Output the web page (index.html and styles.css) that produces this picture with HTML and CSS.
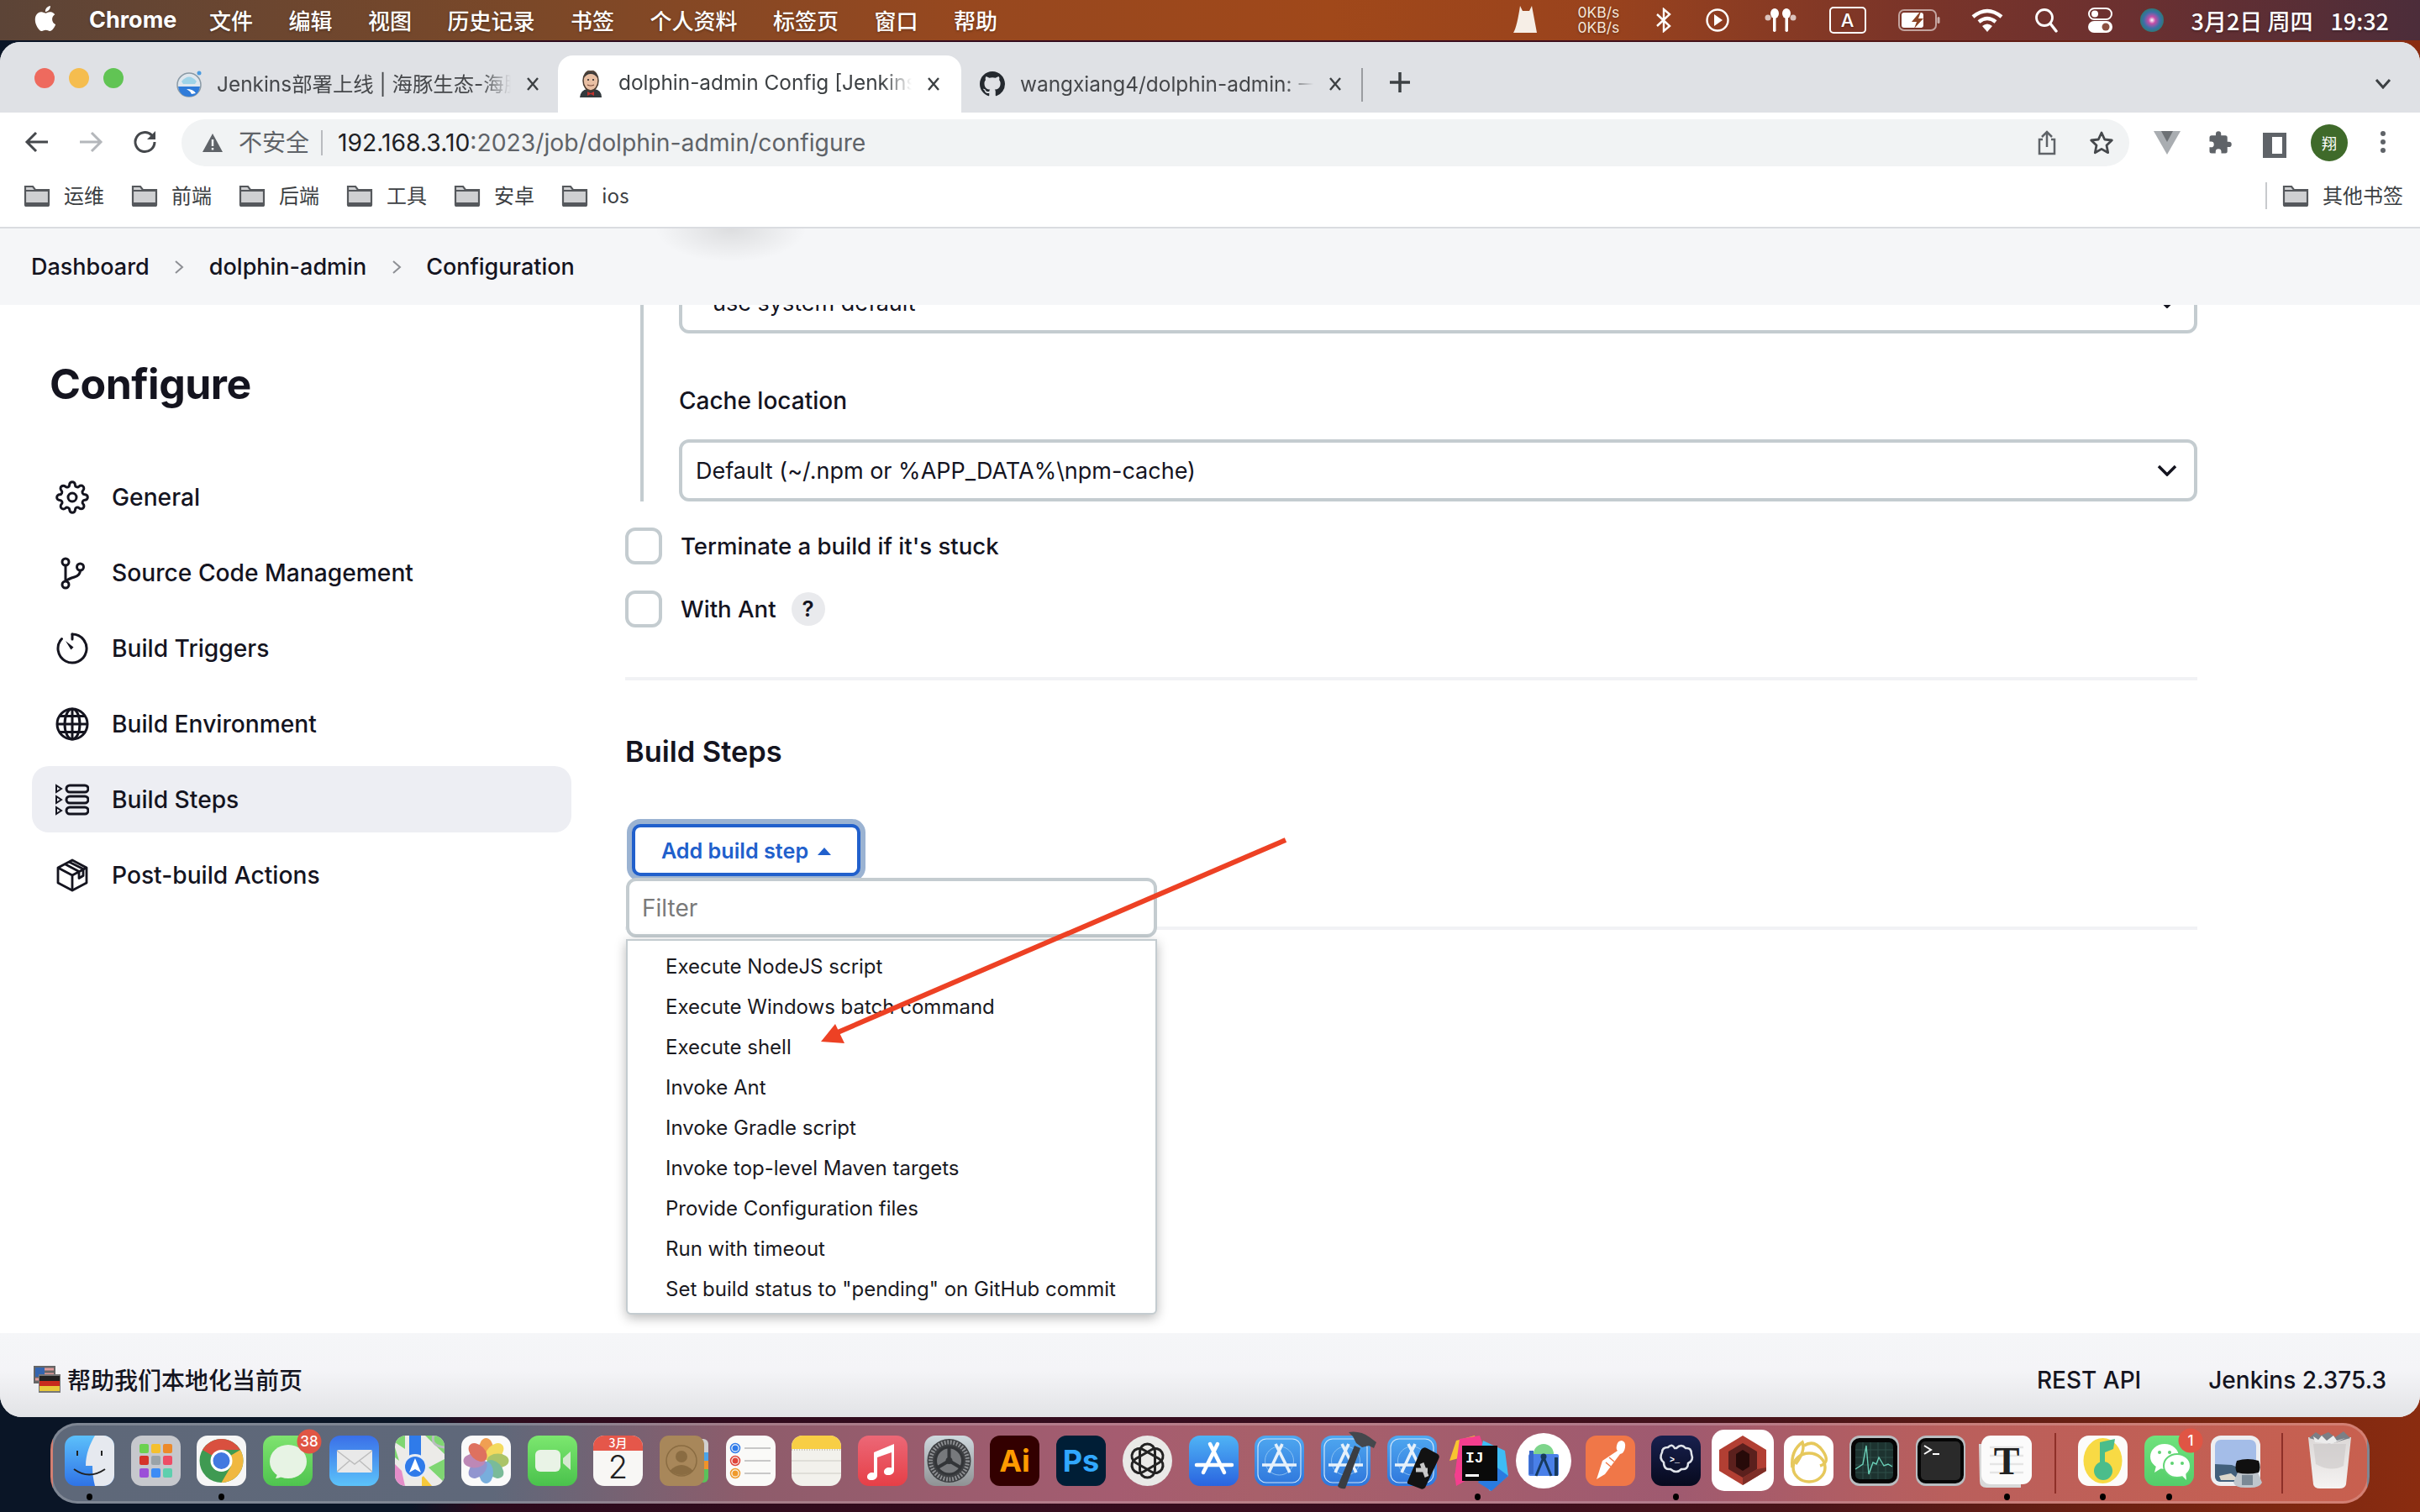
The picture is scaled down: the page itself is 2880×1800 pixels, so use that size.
FILE: index.html
```html
<!DOCTYPE html>
<html lang="zh-CN">
<head>
<meta charset="utf-8">
<title>dolphin-admin Config [Jenkins]</title>
<link rel="stylesheet" href="styles.css">
</head>
<body>
<header class="menubar">
  <svg class="apple" viewBox="0 0 24 24"><path fill="#fff" d="M18.71 19.5c-.83 1.24-1.71 2.45-3.05 2.47-1.34.03-1.77-.79-3.29-.79-1.53 0-2 .77-3.27.82-1.31.05-2.3-1.32-3.14-2.53C4.25 17 2.94 12.45 4.7 9.39c.87-1.52 2.43-2.48 4.12-2.51 1.28-.02 2.5.87 3.29.87.78 0 2.26-1.07 3.81-.91.65.03 2.47.26 3.64 1.98-.09.06-2.17 1.28-2.15 3.81.03 3.02 2.65 4.03 2.68 4.04-.03.07-.42 1.44-1.38 2.83M13 3.5c.73-.83 1.94-1.46 2.94-1.5.13 1.17-.34 2.35-1.04 3.19-.69.85-1.83 1.51-2.95 1.42-.15-1.15.41-2.35 1.05-3.11z"/></svg>
  <nav class="menu-left">
    <b class="app-name">Chrome</b><span>文件</span><span>编辑</span><span>视图</span><span>历史记录</span><span>书签</span><span>个人资料</span><span>标签页</span><span>窗口</span><span>帮助</span>
  </nav>
  <div class="status">
    <svg class="st st-cat" width="33" height="32" viewBox="0 0 33 32"><path fill="#f6eee6" d="M9 0l3 6h8l3-6 6 32H1C4 28 7 14 9 0z"/></svg>
    <div class="speed st-speed"><span>0KB/s</span><span>0KB/s</span></div>
    <svg class="st st-bt" width="20" height="30" viewBox="0 0 20 30"><path fill="none" stroke="#fff" stroke-width="2.4" d="M2 8l15 14-7 6V2l7 6L2 22"/></svg>
    <svg class="st st-play" width="28" height="30" viewBox="0 0 28 30"><circle cx="14" cy="15" r="12.5" fill="none" stroke="#fff" stroke-width="2.4"/><path fill="#fff" d="M10 8l10 7-10 7z"/></svg>
    <svg class="st st-air" width="38" height="28" viewBox="0 0 38 28"><g fill="#fff"><ellipse cx="12" cy="6" rx="5" ry="6"/><ellipse cx="26" cy="6" rx="5" ry="6"/><rect x="10" y="8" width="3.5" height="20" rx="1.7"/><rect x="24.5" y="8" width="3.5" height="20" rx="1.7"/><circle cx="4" cy="11" r="3.5" opacity=".7"/><circle cx="34" cy="11" r="3.5" opacity=".7"/></g></svg>
    <div class="abox">A</div>
    <svg class="st st-batt" width="50" height="26" viewBox="0 0 50 26"><rect x="1" y="1" width="44" height="24" rx="6" fill="none" stroke="#fff" stroke-opacity=".55" stroke-width="2"/><rect x="4" y="4" width="26" height="18" rx="3" fill="#fff"/><rect x="46.5" y="9" width="3" height="8" rx="1.5" fill="#fff" opacity=".6"/><path fill="#8b4426" d="M26 3L16 15h6l-3 8 11-12h-6l3-8z"/></svg>
    <svg class="st st-wifi" width="40" height="28" viewBox="0 0 40 28"><g fill="none" stroke="#fff" stroke-width="4.5"><path d="M3 10q17-14 34 0"/><path d="M10 16q10-8 20 0"/></g><path fill="#fff" d="M14 21q6-5 12 0l-6 7z"/></svg>
    <svg class="st" width="28" height="30" viewBox="0 0 28 30"><circle cx="12" cy="12" r="9.5" fill="none" stroke="#fff" stroke-width="2.8"/><path stroke="#fff" stroke-width="3.4" stroke-linecap="round" d="M19 19l7 9"/></svg>
    <svg class="st" width="29" height="30" viewBox="0 0 29 30"><rect x="1" y="1" width="27" height="13" rx="6.5" fill="none" stroke="#fff" stroke-width="2"/><circle cx="8" cy="7.5" r="4" fill="#fff"/><rect x="0" y="16" width="29" height="14" rx="7" fill="#fff"/><circle cx="21" cy="23" r="4.5" fill="#8b5040"/></svg>
    <svg class="st st-siri" width="28" height="28" viewBox="0 0 28 28"><defs><radialGradient id="siri"><stop offset="0" stop-color="#fff"/><stop offset=".3" stop-color="#c44ea8"/><stop offset=".7" stop-color="#3b6fa8"/><stop offset="1" stop-color="#2d7a7a"/></radialGradient></defs><circle cx="14" cy="14" r="14" fill="url(#siri)"/></svg>
    <span class="clock st-date">3月2日 周四</span>
    <span class="clock st-time">19:32</span>
  </div>
</header>

<main class="window">
  <div class="tabstrip">
    <div class="lights"><i class="red"></i><i class="yellow"></i><i class="green"></i></div>
    <div class="tab tab-one">
      <svg class="fav" viewBox="0 0 30 32"><circle cx="15" cy="17" r="14" fill="#dfe7ee" stroke="#8a9aa6" stroke-width="1.5"/><path fill="#9ed3e8" d="M6 13q9-11 18 0l-2 3H8z"/><path fill="#2f7bd9" d="M2 19h26q-2 12-13 12T2 19z"/><path fill="#fff" d="M12 22q8 0 11 5l-5 1q-2-4-6-6z"/><circle cx="27" cy="3" r="2.5" fill="#4a9be0"/></svg>
      <span class="tab-title">Jenkins部署上线 | 海豚生态-海豚</span>
      <svg class="tab-x" width="16" height="18" viewBox="0 0 16 18"><path fill="none" stroke="#3c4043" stroke-width="2.4" d="M2 2l12 14M14 2L2 16"/></svg>
    </div>
    <div class="tab active">
      <svg class="fav" viewBox="0 0 30 32"><path fill="#33393d" d="M2 32q1-9 9-10h8q9 1 9 10z"/><path fill="#c0332e" d="M11 25l4 2 4-2v5l-4-2-4 2z"/><ellipse cx="15" cy="12" rx="9" ry="12" fill="#e9bfa3" stroke="#4a3b30" stroke-width="1.5"/><path fill="#3d3a38" d="M7 9q1-8 8-8t8 8q-3-5-8-5T7 9z"/><circle cx="12" cy="11" r="1" fill="#222"/><circle cx="18" cy="11" r="1" fill="#222"/><path d="M11 17q4 2 8 0" stroke="#7a4a3a" stroke-width="1.2" fill="none"/></svg>
      <span class="tab-title">dolphin-admin Config [Jenkins]</span>
      <svg class="tab-x" width="16" height="18" viewBox="0 0 16 18"><path fill="none" stroke="#3c4043" stroke-width="2.4" d="M2 2l12 14M14 2L2 16"/></svg>
    </div>
    <div class="tab tab-three">
      <svg class="fav" viewBox="0 0 16 16"><path fill="#24292f" d="M8 0C3.58 0 0 3.58 0 8c0 3.54 2.29 6.53 5.47 7.59.4.07.55-.17.55-.38 0-.19-.01-.82-.01-1.49-2.01.37-2.53-.49-2.69-.94-.09-.23-.48-.94-.82-1.13-.28-.15-.68-.52-.01-.53.63-.01 1.08.58 1.23.82.72 1.21 1.87.87 2.33.66.07-.52.28-.87.51-1.07-1.78-.2-3.64-.89-3.64-3.95 0-.87.31-1.59.82-2.15-.08-.2-.36-1.02.08-2.12 0 0 .67-.21 2.2.82.64-.18 1.32-.27 2-.27.68 0 1.36.09 2 .27 1.53-1.04 2.2-.82 2.2-.82.44 1.1.16 1.92.08 2.12.51.56.82 1.27.82 2.15 0 3.07-1.87 3.75-3.65 3.95.29.25.54.73.54 1.48 0 1.07-.01 1.93-.01 2.2 0 .21.15.46.55.38A8.013 8.013 0 0016 8c0-4.42-3.58-8-8-8z"/></svg>
      <span class="tab-title">wangxiang4/dolphin-admin: 一</span>
      <svg class="tab-x" width="16" height="18" viewBox="0 0 16 18"><path fill="none" stroke="#3c4043" stroke-width="2.4" d="M2 2l12 14M14 2L2 16"/></svg>
    </div>
    <i class="tab-sep"></i>
    <svg class="new-tab" width="26" height="26" viewBox="0 0 26 26"><path stroke="#3c4043" stroke-width="3.5" d="M13 1v24M1 13h24"/></svg>
    <svg class="tab-more" width="20" height="12" viewBox="0 0 20 12"><path fill="none" stroke="#3c4043" stroke-width="3" d="M2 1l8 9 8-9"/></svg>
  </div>

  <div class="toolbar">
    <svg class="nav-btn" width="30" height="30" viewBox="0 0 30 30"><path fill="none" stroke="#45484c" stroke-width="3" d="M28 15H4M14 4L3 15l11 11"/></svg>
    <svg class="nav-btn dim" width="30" height="30" viewBox="0 0 30 30"><path fill="none" stroke="#b4b7bb" stroke-width="3" d="M2 15h24M16 4l11 11-11 11"/></svg>
    <svg class="nav-btn reload" width="30" height="30" viewBox="0 0 30 30"><path fill="none" stroke="#45484c" stroke-width="3" d="M26 15a11.5 11.5 0 1 1-3.5-8.2L26 10"/><path fill="#45484c" d="M27 2v10H17z"/></svg>
    <div class="omnibox">
      <svg class="warn" width="26" height="24" viewBox="0 0 26 24"><path fill="#5f6368" d="M13 1l12 22H1z"/><path stroke="#f1f3f4" stroke-width="2.5" d="M13 8v8M13 18v2.5"/></svg>
      <span class="insecure">不安全</span>
      <i class="omni-sep"></i>
      <span class="url"><b>192.168.3.10</b>:2023/job/dolphin-admin/configure</span>
      <svg class="omni-share" width="24" height="30" viewBox="0 0 24 30"><path fill="none" stroke="#5f6368" stroke-width="2.5" d="M7 11H3v17h18V11h-4M12 20V2M6 8l6-6 6 6"/></svg>
      <svg class="omni-star" width="30" height="30" viewBox="0 0 30 30"><path fill="none" stroke="#45484c" stroke-width="2.8" stroke-linejoin="round" d="M15 3l3.7 8 8.6 1-6.3 6 1.7 8.7-7.7-4.3-7.7 4.3L9 18l-6.3-6 8.6-1z"/></svg>
    </div>
    <svg class="ext-v" width="32" height="28" viewBox="0 0 32 28"><path fill="#a9adb1" d="M0 0h32L16 28z"/><path fill="#6d7175" d="M9 0h14l-7 13z"/></svg>
    <svg class="ext-puzzle" width="30" height="30" viewBox="0 0 24 24"><path fill="#5f6368" d="M20.5 11H19V7a2 2 0 0 0-2-2h-4V3.5a2.5 2.5 0 0 0-5 0V5H4a2 2 0 0 0-2 2v3.8h1.5a2.7 2.7 0 0 1 0 5.4H2V20a2 2 0 0 0 2 2h3.8v-1.5a2.7 2.7 0 0 1 5.4 0V22H17a2 2 0 0 0 2-2v-4h1.5a2.5 2.5 0 0 0 0-5z"/></svg>
    <div class="ext-panel"></div>
    <div class="avatar">翔</div>
    <svg class="ext-dots" width="8" height="28" viewBox="0 0 8 28"><g fill="#5f6368"><circle cx="4" cy="4" r="3"/><circle cx="4" cy="14" r="3"/><circle cx="4" cy="24" r="3"/></g></svg>
  </div>

  <div class="bookmarks">
    <a class="bm"><svg class="folder" viewBox="0 0 32 26"><use href="#folder"/></svg>运维</a>
    <a class="bm"><svg class="folder" viewBox="0 0 32 26"><use href="#folder"/></svg>前端</a>
    <a class="bm"><svg class="folder" viewBox="0 0 32 26"><use href="#folder"/></svg>后端</a>
    <a class="bm"><svg class="folder" viewBox="0 0 32 26"><use href="#folder"/></svg>工具</a>
    <a class="bm"><svg class="folder" viewBox="0 0 32 26"><use href="#folder"/></svg>安卓</a>
    <a class="bm"><svg class="folder" viewBox="0 0 32 26"><use href="#folder"/></svg>ios</a>
    <i class="bm-sep"></i>
    <a class="bm bm-other"><svg class="folder" viewBox="0 0 32 26"><use href="#folder"/></svg>其他书签</a>
  </div>

  <div class="breadcrumbs">
    <a>Dashboard</a><svg class="crumb-sep" width="12" height="20" viewBox="0 0 12 20"><path fill="none" stroke="#8d8f94" stroke-width="2" d="M2 3l8 7-8 7"/></svg>
    <a>dolphin-admin</a><svg class="crumb-sep" width="12" height="20" viewBox="0 0 12 20"><path fill="none" stroke="#8d8f94" stroke-width="2" d="M2 3l8 7-8 7"/></svg>
    <a>Configuration</a>
  </div>

  <div class="jenkins">
    <aside class="sidebar">
      <h1 class="page-title">Configure</h1>
      <ul class="side-nav">
        <li class="side-item"><svg class="side-icon" viewBox="0 0 24 24"><g fill="none" stroke="#14141f" stroke-width="1.8" stroke-linejoin="round"><circle cx="12" cy="12" r="3"/><path d="M19.4 15a1.65 1.65 0 0 0 .33 1.82l.06.06a2 2 0 0 1 0 2.83 2 2 0 0 1-2.83 0l-.06-.06a1.65 1.65 0 0 0-1.82-.33 1.65 1.65 0 0 0-1 1.51V21a2 2 0 0 1-2 2 2 2 0 0 1-2-2v-.09A1.65 1.65 0 0 0 9 19.4a1.65 1.65 0 0 0-1.82.33l-.06.06a2 2 0 0 1-2.83 0 2 2 0 0 1 0-2.83l.06-.06a1.65 1.65 0 0 0 .33-1.82 1.65 1.65 0 0 0-1.51-1H3a2 2 0 0 1-2-2 2 2 0 0 1 2-2h.09A1.65 1.65 0 0 0 4.6 9a1.65 1.65 0 0 0-.33-1.82l-.06-.06a2 2 0 0 1 0-2.83 2 2 0 0 1 2.83 0l.06.06a1.65 1.65 0 0 0 1.82.33H9a1.65 1.65 0 0 0 1-1.51V3a2 2 0 0 1 2-2 2 2 0 0 1 2 2v.09a1.65 1.65 0 0 0 1 1.51 1.65 1.65 0 0 0 1.82-.33l.06-.06a2 2 0 0 1 2.83 0 2 2 0 0 1 0 2.83l-.06.06a1.65 1.65 0 0 0-.33 1.82V9a1.65 1.65 0 0 0 1.51 1H21a2 2 0 0 1 2 2 2 2 0 0 1-2 2h-.09a1.65 1.65 0 0 0-1.51 1z"/></g></svg>General</li>
        <li class="side-item"><svg class="side-icon" viewBox="0 0 40 40"><g fill="none" stroke="#14141f" stroke-width="3"><circle cx="12" cy="7" r="4"/><circle cx="29.5" cy="13" r="4"/><circle cx="12" cy="34" r="4"/><path d="M12 11v19M29.5 17q0 6-7 8t-10.5 5"/></g></svg>Source Code Management</li>
        <li class="side-item"><svg class="side-icon" viewBox="0 0 40 40"><g fill="none" stroke="#14141f" stroke-width="3" stroke-linecap="round"><path d="M20 3a17 17 0 1 1-12.5 5.5"/><path d="M20 3v6"/></g><path fill="#14141f" d="M12 11l9.5 7.5-3 3z"/></svg>Build Triggers</li>
        <li class="side-item"><svg class="side-icon" viewBox="0 0 40 40"><g fill="none" stroke="#14141f" stroke-width="3"><circle cx="20" cy="20" r="18"/><ellipse cx="20" cy="20" rx="9" ry="18"/><path d="M20 2v36M2 20h36M5 10.5h30M5 29.5h30"/></g></svg>Build Environment</li>
        <li class="side-item current"><svg class="side-icon" viewBox="0 0 40 40"><g fill="none" stroke="#14141f" stroke-width="3"><rect x="13" y="3" width="26" height="8" rx="4"/><rect x="13" y="16" width="26" height="8" rx="4"/><rect x="13" y="29" width="26" height="8" rx="4"/></g><path fill="none" stroke="#14141f" stroke-width="2" d="M1 3l6 4-6 4zM1 16l6 4-6 4zM1 29l6 4-6 4z"/></svg>Build Steps</li>
        <li class="side-item"><svg class="side-icon" viewBox="0 0 40 40"><g fill="none" stroke="#14141f" stroke-width="2.8" stroke-linejoin="round"><path d="M20 2l17 9v18l-17 9-17-9V11z"/><path d="M3 11l17 9 17-9M20 20v18M11 6.5l17 9v8l5-3v-8l-17-8.5"/></g></svg>Post-build Actions</li>
      </ul>
    </aside>

    <section class="config">
      <div class="nested">
        <div class="select clipped">- use system default -<svg class="chev" width="24" height="14" viewBox="0 0 24 14"><path fill="none" stroke="#14141f" stroke-width="3.5" d="M2 2l10 10L22 2"/></svg></div>
        <label class="field-label">Cache location</label>
        <div class="select">Default (~/.npm or %APP_DATA%\npm-cache)<svg class="chev" width="24" height="14" viewBox="0 0 24 14"><path fill="none" stroke="#14141f" stroke-width="3.5" d="M2 2l10 10L22 2"/></svg></div>
      </div>
      <div class="check-row first"><i class="checkbox"></i><span>Terminate a build if it's stuck</span></div>
      <div class="check-row"><i class="checkbox"></i><span>With Ant</span><i class="help">?</i></div>
      <hr class="rule rule-a">
      <h2 class="section-title">Build Steps</h2>
      <div class="add-wrap">
        <button class="add-btn">Add build step<svg class="caret" width="16" height="9" viewBox="0 0 16 9"><path fill="#2160cc" d="M8 0l8 9H0z"/></svg></button>
        <div class="dropdown">
          <div class="filter">Filter</div>
          <ul class="menu">
            <li>Execute NodeJS script</li>
            <li>Execute Windows batch command</li>
            <li>Execute shell</li>
            <li>Invoke Ant</li>
            <li>Invoke Gradle script</li>
            <li>Invoke top-level Maven targets</li>
            <li>Provide Configuration files</li>
            <li>Run with timeout</li>
            <li>Set build status to "pending" on GitHub commit</li>
          </ul>
        </div>
      </div>
      <hr class="rule rule-b">
    </section>

    <svg class="annotation" viewBox="0 363 2880 1224"><path fill="none" stroke="#ed4124" stroke-width="6" d="M1530 1000L990 1232"/><path fill="#ed4124" d="M994 1219L977 1240L1005 1242z"/></svg>
  </div>

  <footer class="footer">
    <div class="foot-left">
      <svg class="flag" width="32" height="32" viewBox="0 0 32 32"><rect x="0" y="0" width="26" height="21" fill="#666"/><rect x="2" y="2" width="11" height="11" fill="#3465b0"/><path stroke="#e09a9a" stroke-width="3" d="M13 4h11M13 10h11M2 16h22"/><rect x="6" y="10" width="26" height="22" fill="#777"/><rect x="7" y="12" width="24" height="6" fill="#222"/><rect x="7" y="18" width="24" height="6" fill="#c82a1e"/><rect x="7" y="24" width="24" height="6" fill="#e8c83a"/></svg>
      <span>帮助我们本地化当前页</span>
    </div>
    <a class="foot-link">REST API</a>
    <a class="foot-link ver">Jenkins 2.375.3</a>
  </footer>
</main>

<nav class="dock">
  <div class="dk dot"><svg viewBox="0 0 59 60"><defs><linearGradient id="g-finder" x2="0" y2="1"><stop offset="0" stop-color="#5cc0fb"/><stop offset="1" stop-color="#2f73e6"/></linearGradient></defs><rect width="59" height="60" rx="13" fill="url(#g-finder)"/><path fill="#e6e9ef" d="M36 0h10a13 13 0 0 1 13 13v34a13 13 0 0 1-13 13H36c-2-8-3-15-3-24h-8C25 22 30 10 36 0z"/><path stroke="#222" stroke-width="2" d="M15 18v6M44 18v6"/><path fill="none" stroke="#222" stroke-width="2" d="M11 40q18 13 37 0"/></svg></div>
  <div class="dk"><svg viewBox="0 0 59 60"><rect width="59" height="60" rx="13" fill="#c6c8cd"/><rect x="10" y="10" width="11" height="11" rx="2" fill="#6cd150"/><rect x="24" y="10" width="11" height="11" rx="2" fill="#f5c02d"/><rect x="38" y="10" width="11" height="11" rx="2" fill="#ec8a2a"/><rect x="10" y="24" width="11" height="11" rx="2" fill="#d5332a"/><rect x="24" y="24" width="11" height="11" rx="2" fill="#9aa3a8"/><rect x="38" y="24" width="11" height="11" rx="2" fill="#ee4d66"/><rect x="10" y="39" width="11" height="11" rx="2" fill="#9b4fd8"/><rect x="24" y="39" width="11" height="11" rx="2" fill="#3d8cf5"/><rect x="38" y="39" width="11" height="11" rx="2" fill="#5ecfae"/></svg></div>
  <div class="dk dot"><svg viewBox="0 0 59 60"><rect width="59" height="60" rx="13" fill="#f6f6f6"/><circle cx="29.5" cy="30" r="26" fill="#3f9a52"/><path fill="#f0b840" d="M52 17A26 26 0 0 1 29.5 56L41 36.5 41 23.5z"/><path fill="#d9503f" d="M7 17A26 26 0 0 1 52 17H29.5L18 23.5z"/><circle cx="29.5" cy="30" r="13" fill="#fff"/><circle cx="29.5" cy="30" r="10" fill="#4279e0"/></svg></div>
  <div class="dk"><svg viewBox="0 0 59 60"><defs><linearGradient id="g-msg" x2="0" y2="1"><stop offset="0" stop-color="#7fe36f"/><stop offset="1" stop-color="#4fc44f"/></linearGradient></defs><rect width="59" height="60" rx="13" fill="url(#g-msg)"/><ellipse cx="30" cy="31" rx="22" ry="20" fill="#e7f3e4"/><path fill="#e7f3e4" d="M18 44l-3 7q7-1 11-4z"/><circle cx="55" cy="7" r="14.5" fill="#e05544"/><text class="badge-t" x="55" y="13">38</text></svg></div>
  <div class="dk"><svg viewBox="0 0 59 60"><defs><linearGradient id="g-mail" x2="0" y2="1"><stop offset="0" stop-color="#3a6fe8"/><stop offset="1" stop-color="#5cc3fa"/></linearGradient></defs><rect width="59" height="60" rx="13" fill="url(#g-mail)"/><rect x="9" y="17" width="42" height="27" rx="2" fill="#e9e9e9"/><path fill="none" stroke="#bdbdbd" stroke-width="1.5" d="M9 18l21 16 21-16M9 43l15-13M51 43L36 30"/></svg></div>
  <div class="dk"><svg viewBox="0 0 59 60"><clipPath id="c-maps"><rect width="59" height="60" rx="13"/></clipPath><g clip-path="url(#c-maps)"><rect width="59" height="60" fill="#ecebe8"/><path fill="#7fd672" d="M0 0h12v16L0 8zM44 0h15v22L36 0zM40 38l19 18V28zM0 14v12l5 4z"/><path fill="#e48dc9" d="M0 34l8 8 4 18H0z"/><path fill="#f6c93a" d="M32 46l12 14H32z"/><rect x="17" y="0" width="14" height="26" fill="#2f7bea"/><path fill="none" stroke="#b9bdbf" stroke-width="3" d="M46 0q-4 12 13 14"/><circle cx="24" cy="37" r="15" fill="#e8ecf2"/><circle cx="24" cy="37" r="12" fill="#2f7bea"/><path fill="#fff" d="M24 27l7 17-7-4-7 4z"/></g></svg></div>
  <div class="dk"><svg viewBox="0 0 59 60"><rect width="59" height="60" rx="13" fill="#fafafa"/><g opacity=".82"><ellipse cx="29.5" cy="16" rx="8.5" ry="13" fill="#ee8c2e"/><ellipse cx="29.5" cy="16" rx="8.5" ry="13" fill="#f2d33c" transform="rotate(45 29.5 30)"/><ellipse cx="29.5" cy="16" rx="8.5" ry="13" fill="#9ab94a" transform="rotate(90 29.5 30)"/><ellipse cx="29.5" cy="16" rx="8.5" ry="13" fill="#5fae84" transform="rotate(135 29.5 30)"/><ellipse cx="29.5" cy="16" rx="8.5" ry="13" fill="#5c9ed6" transform="rotate(180 29.5 30)"/><ellipse cx="29.5" cy="16" rx="8.5" ry="13" fill="#7a7fc6" transform="rotate(225 29.5 30)"/><ellipse cx="29.5" cy="16" rx="8.5" ry="13" fill="#b070a8" transform="rotate(270 29.5 30)"/><ellipse cx="29.5" cy="16" rx="8.5" ry="13" fill="#d8533e" transform="rotate(315 29.5 30)"/></g></svg></div>
  <div class="dk"><svg viewBox="0 0 59 60"><defs><linearGradient id="g-ft" x2="0" y2="1"><stop offset="0" stop-color="#7ce76f"/><stop offset="1" stop-color="#4ac24c"/></linearGradient></defs><rect width="59" height="60" rx="13" fill="url(#g-ft)"/><rect x="9" y="17" width="30" height="26" rx="6" fill="#e9f3e6"/><path fill="#d5e9d0" d="M42 27l9-8v22l-9-8z"/></svg></div>
  <div class="dk"><svg viewBox="0 0 59 60"><clipPath id="c-cal"><rect width="59" height="60" rx="13"/></clipPath><g clip-path="url(#c-cal)"><rect width="59" height="60" fill="#f8f7f5"/><rect width="59" height="18" fill="#e5574a"/></g><text class="cal-m" x="29.5" y="14">3月</text><text class="cal-d" x="29.5" y="51">2</text></svg></div>
  <div class="dk"><svg viewBox="0 0 59 60"><path fill="#5bc25a" d="M50 40h8v10a6 6 0 0 1-6 6h-2z"/><path fill="#f0932b" d="M50 30h8v10h-8z"/><path fill="#4aa4ea" d="M50 20h8v10h-8z"/><path fill="#d0d0d0" d="M50 4h2a6 6 0 0 1 6 6v10h-8z"/><rect width="53" height="60" rx="11" fill="#a8875a"/><g fill="none" stroke="#8a6c42" stroke-width="1.5"><circle cx="26" cy="30" r="18"/></g><circle cx="26" cy="25" r="7" fill="#8a6c42"/><path fill="#8a6c42" d="M12 42q14-14 28 0-14 10-28 0z"/></svg></div>
  <div class="dk"><svg viewBox="0 0 59 60"><rect width="59" height="60" rx="13" fill="#fafaf8"/><g fill="none" stroke-width="1.5"><circle cx="11" cy="15" r="5.5" stroke="#2f7bea"/><circle cx="11" cy="30" r="5.5" stroke="#e0453a"/><circle cx="11" cy="45" r="5.5" stroke="#ef9a2c"/></g><circle cx="11" cy="15" r="3.5" fill="#2f7bea"/><circle cx="11" cy="30" r="3.5" fill="#e0453a"/><circle cx="11" cy="45" r="3.5" fill="#ef9a2c"/><path stroke="#c8c8c8" stroke-width="2" d="M22 15h31M22 30h31M22 45h31"/></svg></div>
  <div class="dk"><svg viewBox="0 0 59 60"><clipPath id="c-notes"><rect width="59" height="60" rx="13"/></clipPath><g clip-path="url(#c-notes)"><rect width="59" height="60" fill="#f2f1ec"/><rect width="59" height="16" fill="#f8ce45"/><path stroke="#c9c7bd" stroke-dasharray="1 2" stroke-width="2" d="M0 17h59"/><path stroke="#dfded8" stroke-width="2" d="M0 30h59M0 45h59"/></g></svg></div>
  <div class="dk"><svg viewBox="0 0 59 60"><defs><linearGradient id="g-music" x2="0" y2="1"><stop offset="0" stop-color="#ec6877"/><stop offset="1" stop-color="#e63f47"/></linearGradient></defs><rect width="59" height="60" rx="13" fill="url(#g-music)"/><path fill="#fff" d="M19 20l24-10v31c0 4-3 6-7 6s-5-2-5-4c0-3 3-5 6-5l3 .3V20l-17 6v21c0 4-3 6-7 6s-5-2-5-4c0-3 3-5 6-5l2 .3z"/></svg></div>
  <div class="dk"><svg viewBox="0 0 59 60"><defs><linearGradient id="g-sys" x2="0" y2="1"><stop offset="0" stop-color="#cfd9de"/><stop offset="1" stop-color="#8f9294"/></linearGradient></defs><rect width="59" height="60" rx="13" fill="url(#g-sys)"/><circle cx="29.5" cy="30" r="26" fill="#3e4043"/><circle cx="29.5" cy="30" r="22" fill="none" stroke="#909295" stroke-width="5" stroke-dasharray="1.8 1.8"/><circle cx="29.5" cy="30" r="16" fill="#77797c" stroke="#333538" stroke-width="3"/><path stroke="#333538" stroke-width="4" d="M29.5 30V14M29.5 30L43 38M29.5 30L16 38"/><circle cx="29.5" cy="30" r="4" fill="#333538"/></svg></div>
  <div class="dk"><svg viewBox="0 0 59 60"><rect width="59" height="60" rx="12" fill="#330000"/><text class="logo-t ai" x="29.5" y="43">Ai</text></svg></div>
  <div class="dk"><svg viewBox="0 0 59 60"><rect width="59" height="60" rx="12" fill="#001e36"/><text class="logo-t ps" x="29.5" y="43">Ps</text></svg></div>
  <div class="dk"><svg viewBox="0 0 59 60"><ellipse cx="29.5" cy="30" rx="29.5" ry="30" fill="#e9e9e7"/><g fill="none" stroke="#222" stroke-width="3"><rect x="20.5" y="10" width="18" height="40" rx="9"/><rect x="20.5" y="10" width="18" height="40" rx="9" transform="rotate(60 29.5 30)"/><rect x="20.5" y="10" width="18" height="40" rx="9" transform="rotate(120 29.5 30)"/></g></svg></div>
  <div class="dk"><svg viewBox="0 0 59 60"><defs><linearGradient id="g-as" x2="0" y2="1"><stop offset="0" stop-color="#4fb4f5"/><stop offset="1" stop-color="#2a64e0"/></linearGradient></defs><rect width="59" height="60" rx="13" fill="url(#g-as)"/><path fill="none" stroke="#fff" stroke-width="4.5" stroke-linecap="round" d="M34 10L17 44M25 10l17 34M9 35h42"/></svg></div>
  <div class="dk"><svg viewBox="0 0 59 60"><use href="#xc-base"/></svg></div>
  <div class="dk"><svg viewBox="0 0 59 60"><use href="#xc-base"/><path fill="#3a3d42" d="M20 60L40 12l7 3-18 48q-6 1-9-3z"/><path fill="#44474c" d="M33-4q14-2 25 6l8 6-3 7-6-3-8 2-7-5-4-8z"/></svg></div>
  <div class="dk"><svg viewBox="0 0 59 60"><use href="#xc-base"/><path fill="#121212" d="M24 55L40 17q3-4 7-2l13 7q3 2 1 6L45 62q-3 3-6 1l-13-5q-3-1-2-3z"/><path stroke="#c8c8c8" stroke-width="5" d="M34 41h14M41 33l6 16"/></svg></div>
  <div class="dk dot"><svg viewBox="0 0 59 60"><path fill="#f7c530" d="M4 6l22-6 6 20L-4 30z"/><path fill="#f43e8e" d="M8 4l24-4 10 30L2 50z"/><path fill="#3dbcf5" d="M36 6l26 12 4 30-22 18L28 40z"/><path fill="#2a7be0" d="M42 30l24 18-20 18-16-10z"/><path fill="#f43e8e" d="M2 46l10-12 10 16-18 10z"/><rect x="11" y="12" width="42" height="42" fill="#0a0a0a"/><text class="ij-t" x="15" y="32">IJ</text><rect x="15" y="46" width="16" height="3" fill="#fff"/></svg></div>
  <div class="dk"><svg viewBox="0 0 59 60"><ellipse cx="29" cy="30" rx="33" ry="33" fill="#fff"/><path fill="#7ed58c" d="M17 22a12 12 0 0 1 24 0z"/><rect x="11" y="22" width="36" height="26" rx="2" fill="#4a80e8"/><rect x="12" y="18" width="5" height="28" fill="#3868c8"/><path fill="none" stroke="#173a5e" stroke-width="3" d="M29 26L20 48M29 26l9 22"/><circle cx="29" cy="25" r="3.5" fill="#173a5e"/><rect x="42" y="26" width="4" height="22" fill="#173a5e"/></svg></div>
  <div class="dk"><svg viewBox="0 0 59 60"><rect width="59" height="60" rx="13" fill="#f07748"/><path fill="#fff" d="M13 52l10-6 18-24q5-1 6-8t-4-8q-5 0-6 6-1 4 1 6L20 30l-5 16z"/><path stroke="#f07748" stroke-width="1.5" d="M24 32l6 5M28 26l6 5"/></svg></div>
  <div class="dk dot"><svg viewBox="0 0 59 60"><defs><linearGradient id="g-warp" x2="0" y2="1"><stop offset="0" stop-color="#18204e"/><stop offset="1" stop-color="#070a1e"/></linearGradient></defs><rect width="59" height="60" rx="13" fill="url(#g-warp)"/><path fill="none" stroke="#dfe3ea" stroke-width="2.5" d="M30 15q6-6 11 0 7-1 7 7 3 8-4 11 0 8-8 7-6 6-13 0-8 1-8-8-6-5-2-12 0-6 7-6 5-5 8 1z"/><text class="warp-t" x="22" y="32">&gt;_</text></svg></div>
  <div class="dk"><svg class="wide" viewBox="0 0 74 73"><rect width="74" height="73" rx="15" fill="#fff"/><path fill="#b23f33" d="M37 7l28 17v25L37 66 9 49V24z"/><path fill="#5b201d" d="M37 16l17 10v21L37 57 20 47V26z"/><path fill="#270a09" d="M37 24l8 5v15l-8 5-8-5V29z"/><path fill="#7e2e27" d="M37 66l28-17v-4L54 47 37 57z"/></svg></div>
  <div class="dk"><svg viewBox="0 0 59 60"><rect width="59" height="60" rx="13" fill="#fff"/><g fill="none" stroke="#e6c85c" stroke-width="3.5"><path d="M10 38q-2-20 12-30 4 10-8 26"/><path d="M24 12q12-8 22 6t-3 18"/><ellipse cx="30" cy="38" rx="19" ry="17"/></g></svg></div>
  <div class="dk"><svg viewBox="0 0 59 60"><rect width="59" height="60" rx="12" fill="#b9bdc0"/><rect x="2" y="3" width="55" height="54" rx="10" fill="#050505"/><rect x="7" y="8" width="45" height="44" rx="5" fill="#1d3330"/><path stroke="#2f4f49" d="M7 17h45M7 26h45M7 35h45M7 44h45M16 8v44M25 8v44M34 8v44M43 8v44"/><path fill="none" stroke="#6bd0b8" stroke-width="1.4" d="M7 40l9-6 4-22 3 34 5-14 4 2 3-8 6 10 5-2 5 3"/></svg></div>
  <div class="dk"><svg viewBox="0 0 59 60"><rect width="59" height="60" rx="12" fill="#b9bdc0"/><rect x="2" y="3" width="55" height="54" rx="10" fill="#050505"/><rect x="6" y="7" width="47" height="46" rx="5" fill="#2a2a2a"/><path fill="none" stroke="#fff" stroke-width="2" d="M10 12l8 5-8 5"/><path stroke="#fff" stroke-width="2" d="M20 22h8"/></svg></div>
  <div class="dk dot"><svg viewBox="0 0 59 60"><path fill="#d8d8d8" d="M-4 10h50v52H5q-8 0-8-8z"/><rect x="-1" y="0" width="60" height="58" rx="11" fill="#fbfbfb"/><path stroke="#e5e5e5" stroke-width="2.5" d="M9 14h40M9 24h40M9 34h40M9 44h40"/><text class="typ-t" x="29" y="46">T</text></svg></div>
  <i class="dock-sep"></i>
  <div class="dk dot"><svg viewBox="0 0 59 60"><rect width="59" height="60" rx="13" fill="#fcfcfa"/><ellipse cx="29.5" cy="30" rx="23" ry="27" fill="#f8da44"/><path fill="#4bbd8b" d="M26 8l18-4-2 12-10 4v20h-6z"/><ellipse cx="30" cy="42" rx="11" ry="11" fill="#4bbd8b"/></svg></div>
  <div class="dk dot"><svg viewBox="0 0 59 60"><defs><linearGradient id="g-wx" x2="0" y2="1"><stop offset="0" stop-color="#6fe27c"/><stop offset="1" stop-color="#54cd6a"/></linearGradient></defs><rect width="59" height="60" rx="13" fill="url(#g-wx)"/><ellipse cx="24" cy="25" rx="17" ry="15" fill="#fff"/><path fill="#fff" d="M14 36l-2 8 8-5z"/><ellipse cx="39" cy="36" rx="16" ry="14" fill="#fff" stroke="#62d676" stroke-width="2"/><path fill="#fff" d="M44 47l6 6-1-10z"/><g fill="#5ed272"><circle cx="18" cy="20" r="2"/><circle cx="30" cy="20" r="2"/><circle cx="33" cy="33" r="2"/><circle cx="45" cy="33" r="2"/></g><circle cx="55" cy="6" r="14.5" fill="#e05544"/><text class="badge-t" x="55" y="12">1</text></svg></div>
  <div class="dk"><svg viewBox="0 0 59 60"><rect width="59" height="60" rx="12" fill="#eeeef0"/><rect x="5" y="5" width="49" height="50" rx="7" fill="#a4bde8"/><path fill="#42607c" d="M5 34l20 1 29 12v2a6 6 0 0 1-6 6H11a6 6 0 0 1-6-6z"/><path fill="#dcd8cc" d="M10 48l14-3 10 8H12z"/><path fill="#bfc6cc" d="M32 44h24l5 12q-3 6-14 6h-6q-12 0-14-6z"/><path fill="#101010" d="M31 44q-3-6 0-14 13-4 26 0 3 8 0 14-13 3-26 0z"/><rect x="37" y="47" width="13" height="12" fill="#7b8995"/></svg></div>
  <i class="dock-sep"></i>
  <div class="dk"><svg viewBox="0 0 59 60"><defs><linearGradient id="g-tr" x2="0" y2="1"><stop offset="0" stop-color="#dcd8d7"/><stop offset="1" stop-color="#f5f3f2"/></linearGradient></defs><path fill="url(#g-tr)" d="M4 2h51l-6 56q-1 5-8 5H18q-7 0-8-5z"/><path fill="#c9c5c5" opacity=".55" d="M10 10h39l-3 26q-15 8-33-2z"/><path fill="#7b7f86" d="M5 3l8-7 6 4 9-4 8 6 10-7 8 8-24 7z"/><path fill="#ececec" d="M10 1l6 4 4-5 6 6 8-6 4 6 10-3-16 7-20-2z"/></svg></div>
</nav>

<svg class="defs-sheet" width="0" height="0" aria-hidden="true">
  <defs>
    <g id="folder"><path fill="#cfd0d2" stroke="#55585c" stroke-width="2.2" d="M2 24V2h9l3 4h16v18q0 1-1 1H3q-1 0-1-1z"/><path fill="#55585c" d="M2 21h28v3H2zM2 6h28v2H2z"/></g>
    <g id="xc-base"><defs><linearGradient id="g-xc" x2="0" y2="1"><stop offset="0" stop-color="#4fa8f0"/><stop offset="1" stop-color="#2e76dc"/></linearGradient></defs><rect width="59" height="60" rx="13" fill="url(#g-xc)"/><rect x="4" y="4" width="51" height="52" rx="10" fill="none" stroke="#cfe4f8" stroke-width="1.2"/><circle cx="29.5" cy="30" r="17" fill="none" stroke="#9ccbf4" stroke-width=".8"/><path fill="none" stroke="#e6f1fb" stroke-width="3.6" d="M33 10L17 44M25 10l17 34M9 35h41"/></g>
  </defs>
</svg>
</body>
</html>
```
FILE: styles.css
```css
*{box-sizing:border-box;margin:0;padding:0}
html,body{width:2880px;height:1800px;overflow:hidden}
body{
  display:flex;flex-direction:column;
  font-family:Inter,"Noto Sans CJK SC",sans-serif;color:#14141f;
  background:linear-gradient(90deg,#0a1526 0,#0a1526 17%,#2c0a1c 20%,#3a0d1e 60%,#4a1418 75%,#6e2212 88%,#8a2c10 100%);
}
ul{list-style:none}
i{display:block;font-style:normal}
a{color:inherit;text-decoration:none}
svg{display:block;flex:none}

/* menu bar */
.menubar{
  height:48px;flex:none;display:flex;align-items:center;padding:0 37px 0 36px;color:#fff;
  background:linear-gradient(90deg,#5c4437 0,#7b4828 22%,#97481f 40%,#a0481a 55%,#9a431d 66%,#7c3528 78%,#6b3030 88%,#4c2d3a 100%);
  text-shadow:0 1px 3px rgba(0,0,0,.35);
}
.apple{width:36px;height:36px;margin-top:-4px}
.menu-left{display:flex;gap:42.5px;margin-left:34px;font-size:26px;font-family:"Noto Sans CJK SC",sans-serif;font-weight:500;line-height:48px}
.app-name{font-family:Inter,sans-serif;font-size:27px;font-weight:700;margin-right:-4px}
.status{margin-left:auto;display:flex;align-items:center;gap:36px}
.st-speed{margin-left:9px}
.st-bt{margin-left:5px;margin-right:4px}
.st-play{margin-right:6px}
.st-air{margin-right:3px}
.st-cat{margin-top:-2px}
.st-batt{margin-left:2px}
.st-siri{margin-left:-3px}
.speed{display:flex;flex-direction:column;font-size:17.5px;line-height:18px;width:51px;color:#f5e6da}
.st-date{margin-left:-3px}
.st-time{margin-left:-15px}
.abox{width:44px;height:32px;border:2px solid #fff;border-radius:5px;font-size:22px;font-weight:500;text-align:center;line-height:28px}
.clock{font-size:27px;font-weight:500;font-family:"Noto Sans CJK SC",sans-serif;white-space:nowrap}

/* window */
.window{
  width:2880px;height:1637px;margin-top:2px;flex:none;
  background:#fff;border-radius:24px 24px 26px 26px;overflow:hidden;display:flex;flex-direction:column;
}
.tabstrip{height:84px;flex:none;background:#dfe1e5;display:flex;align-items:flex-end;position:relative}
.lights{display:flex;gap:17px;position:absolute;left:41px;top:31px}
.lights i{width:24px;height:24px;border-radius:50%}
.red{background:#ee6a5e}.yellow{background:#f5bd4f}.green{background:#61c454}
.tab{height:68px;display:flex;align-items:center;font-size:24px;color:#45474a;position:relative;width:480px;padding:0 22px 0 26px}
.tab-one{margin-left:184px;padding-right:22px}
.active{padding-left:24px;padding-right:25px}
.tab-three{width:477px;padding-left:22px;padding-right:24px}
.active{background:#fff;border-radius:18px 18px 0 0;color:#3c4043}
.fav{width:30px;height:32px;margin-right:18px}
.tab-title{flex:1;overflow:hidden;white-space:nowrap;padding-bottom:4px;font-size:24.4px;
  -webkit-mask-image:linear-gradient(90deg,#000 90%,transparent 100%);mask-image:linear-gradient(90deg,#000 90%,transparent 100%)}
.tab-x{margin-left:18px}
.tab-sep{width:2px;height:40px;background:#9a9ca0;position:absolute;left:1620px;top:31px}
.new-tab{position:absolute;left:1653px;top:35px}
.tab-more{position:absolute;left:2826px;top:44px}

.toolbar{height:64px;flex:none;display:flex;align-items:flex-end;background:#fff;position:relative}
.nav-btn{position:absolute;left:29px;top:20px}
.dim{left:93px}
.reload{left:158px}
.omnibox{
  position:absolute;left:216px;top:8px;width:2318px;height:56px;border-radius:28px;background:#f1f3f4;
  display:flex;align-items:center;padding-left:24px;
}
.insecure{font-size:28px;color:#5f6368;margin:-4px 0 0 18px;font-family:"Noto Sans CJK SC",sans-serif}
.omni-sep{width:2px;height:30px;background:#b9bbbf;margin:0 18px 0 14px}
.url{font-size:28.3px;color:#5f6368;white-space:nowrap;font-weight:400}
.url b{font-weight:400;color:#202124}
.omni-share{margin-left:auto;margin-right:38px}
.omni-star{margin-right:18px}
.ext-v{position:absolute;left:2563px;top:22px}
.ext-puzzle{position:absolute;left:2627px;top:21px}
.ext-panel{position:absolute;left:2693px;top:24px;width:28px;height:30px;border:solid #5f6368;border-width:5px 5px 5px 11px}
.avatar{position:absolute;left:2750px;top:14px;width:44px;height:44px;border-radius:50%;background:#3f6a2a;color:#fff;font-size:18px;text-align:center;line-height:44px;font-family:"Noto Sans CJK SC",sans-serif}
.ext-dots{position:absolute;left:2832px;top:21px}

.bookmarks{height:74px;flex:none;display:flex;align-items:center;border-bottom:2px solid #dadce0;padding:0 20px 2px 28px;font-size:24px;color:#3c4043;font-family:"Noto Sans CJK SC",sans-serif;line-height:30px}
.bm{display:flex;align-items:center;width:128px;white-space:nowrap;padding-bottom:2px}
.folder{width:32px;height:26px;margin-right:16px;margin-top:2px}
.bm-sep{width:2px;height:32px;background:#c8cacd;margin-left:auto;margin-right:18px}
.bm-other{width:auto}

.breadcrumbs{
  height:91px;flex:none;display:flex;align-items:center;padding-left:37px;font-size:27px;font-weight:500;position:relative;z-index:2;
  background:radial-gradient(ellipse 90px 40px at 870px 0,rgba(0,0,0,.1),transparent),#f5f6f8;
}
.crumb-sep{margin:0 29.5px}

/* jenkins page */
.jenkins{flex:1;display:flex;min-height:0;position:relative;overflow:hidden;background:#fff}
.sidebar{width:744px;flex:none;padding:0 64px 0 38px}
.page-title{font-size:50px;font-weight:700;line-height:64px;margin:62px 0 0 21px;letter-spacing:-.5px}
.side-nav{margin-top:63px;display:flex;flex-direction:column;gap:11px}
.side-item{height:79px;display:flex;align-items:center;padding-left:28px;font-size:28.2px;font-weight:500;border-radius:20px}
.side-icon{width:40px;height:40px;margin-right:27px}
.current{background:#edeef3}

.config{width:1871px;flex:none;margin-top:-40px;font-size:27px}
.nested{margin-left:18px;border-left:4px solid #c4ccd0;padding-left:42px}
.select{height:74px;border:4px solid #c4ccd0;border-radius:12px;display:flex;align-items:center;padding:0 20px 0 16px;justify-content:space-between;font-weight:400;white-space:nowrap}
.chev{flex:none}
.field-label{display:block;line-height:36px;margin:62px 0 28px;font-weight:500;font-size:28px}
.check-row{display:flex;align-items:center;margin-top:31px;height:44px;font-weight:500;font-size:27.6px}
.checkbox{width:44px;height:44px;border:4px solid #c4ccd0;border-radius:12px;margin-right:22px}
.help{width:40px;height:40px;border-radius:50%;background:#e9eaed;margin-left:18px;text-align:center;line-height:40px;font-size:26px;font-weight:600}
.rule{border:0;height:4px;background:#f1f2f5}
.rule-a{margin-top:59px}
.section-title{font-size:34.4px;line-height:44px;font-weight:600;margin-top:63px}
.add-wrap{margin:64px 0 0 8px;width:272px;height:62px;position:relative}
.add-btn{
  width:272px;height:62px;border:4px solid #2160cc;border-radius:10px;background:#fff;color:#2160cc;padding-top:2px;
  box-shadow:0 0 0 6px #9bb3d2;font:600 25.2px Inter,sans-serif;display:flex;align-items:center;justify-content:center;gap:11px;
}
.dropdown{position:absolute;left:-7px;top:64px;width:632px;z-index:3}
.filter{height:71px;border:4px solid #c4ccd0;border-radius:12px;background:#fff;color:#7a7a7a;font-size:28px;line-height:65px;padding-left:15px;font-weight:400}
.menu{margin-top:2px;height:447px;background:#fff;border:2px solid #c4ccd0;box-shadow:0 4px 14px rgba(0,0,0,.28);border-radius:0 0 6px 6px;padding-top:6.5px;font-size:24px;font-weight:400}
.menu li{height:48px;line-height:48px;padding-left:45px;white-space:nowrap;color:#1a1a1f}
.rule-b{margin-top:60px}
.annotation{position:absolute;left:0;top:0;width:2880px;height:1224px;z-index:4;pointer-events:none}

.footer{
  height:100px;flex:none;display:flex;align-items:center;padding:10px 40px 0 40px;font-size:28px;font-weight:500;
  background:linear-gradient(180deg,#f5f6f8 0,#f4f4f7 45%,#e2e3e6 100%);
}
.foot-left{display:flex;align-items:center;gap:8px;margin-right:auto;font-family:"Noto Sans CJK SC",sans-serif;color:#14141f}
.foot-link{font-size:28px;margin-top:2px}
.ver{margin-left:80px}

/* dock */
.dock{
  width:2760px;height:96px;margin:7px 0 0 60px;flex:none;display:flex;align-items:center;padding:0 0 0 4px;
  border:3px solid rgba(255,255,255,.2);border-radius:32px;
  background:linear-gradient(90deg,#5e6879 0,#5f687a 19%,#8e5c6b 30%,#a55c70 46%,#a8606a 52%,#9f5a70 70%,#ba5f5c 82%,#c8604f 100%);
}
.dk{width:78.7px;flex:none;height:60px;margin-top:-6px;display:flex;justify-content:center;position:relative}
.dk svg{width:59px;height:60px;overflow:visible}
.dk svg.wide{width:74px;height:73px;margin-top:-7px;flex:none}
.dot::after{content:"";position:absolute;left:50%;bottom:-17px;width:7px;height:8px;margin-left:-3.5px;border-radius:50%;background:#000}
.dock-sep{width:2px;height:72px;background:#8e2f28;margin:0 17px;flex:none}
.dock-sep:last-of-type{margin:0 15.5px}
.badge-t{font:500 17px Inter,sans-serif;fill:#fff;text-anchor:middle}
.cal-m{font:500 14px "Noto Sans CJK SC",sans-serif;fill:#fff;text-anchor:middle}
.cal-d{font:300 38px Inter,sans-serif;fill:#222;text-anchor:middle}
.logo-t{font:700 36px Inter,sans-serif;text-anchor:middle}
.ai{fill:#ff9a00}
.ps{fill:#31a8ff}
.ij-t{font:700 18px "Liberation Mono",monospace;fill:#fff}
.warp-t{font:600 10px "Liberation Mono",monospace;fill:#fff}
.typ-t{font:700 46px "Liberation Serif",serif;fill:#222;text-anchor:middle}
.defs-sheet{position:absolute}
```
